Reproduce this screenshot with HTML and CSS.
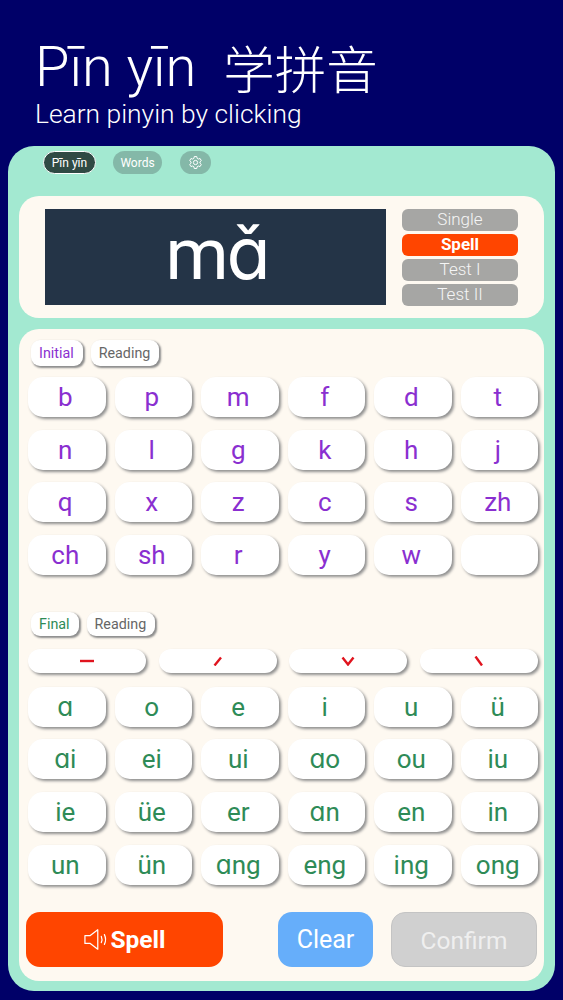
FILE: index.html
```html
<!DOCTYPE html>
<html lang="en">
<head>
<meta charset="utf-8">
<title>Pīn yīn</title>
<link rel="stylesheet" href="styles.css">
</head>
<body>
<header class="hero">
  <h1 class="title"><span>Pīn yīn</span><span class="title-cjk">学拼音</span></h1>
  <p class="subtitle">Learn pinyin by clicking</p>
</header>
<main class="card">
  <nav class="tabs">
    <button class="tab tab-active">Pīn yīn</button>
    <button class="tab tab-words">Words</button>
    <button class="tab tab-gear" aria-label="Settings">
      <svg viewBox="0 0 24 24" width="15" height="15" fill="none" stroke="#fff" stroke-width="1.6" stroke-linejoin="round"><path d="M10 2.500h4l.6 2.900 1.900 1.100 2.800-.9 2 3.400-2.200 2 0 2.100 2.200 2-2 3.400-2.800-.9-1.900 1.100-.6 2.900h-4l-.6-2.900-1.900-1.100-2.800.9-2-3.400 2.200-2 0-2.100-2.200-2 2-3.400 2.800.9 1.900-1.100z"/><circle cx="12" cy="12" r="3.400"/></svg>
    </button>
  </nav>
  <section class="panel display-panel">
    <div class="display">mɑ̌</div>
    <div class="modes">
      <button class="mode">Single</button>
      <button class="mode mode-on">Spell</button>
      <button class="mode">Test I</button>
      <button class="mode">Test II</button>
    </div>
  </section>
  <section class="panel keys-panel">
    <div class="labels">
      <span class="label purple">Initial</span>
      <span class="label">Reading</span>
    </div>
    <div class="keys purple">
      <button class="key">b</button><button class="key">p</button><button class="key">m</button><button class="key">f</button><button class="key">d</button><button class="key">t</button>
      <button class="key">n</button><button class="key">l</button><button class="key">g</button><button class="key">k</button><button class="key">h</button><button class="key">j</button>
      <button class="key">q</button><button class="key">x</button><button class="key">z</button><button class="key">c</button><button class="key">s</button><button class="key">zh</button>
      <button class="key">ch</button><button class="key">sh</button><button class="key">r</button><button class="key">y</button><button class="key">w</button><button class="key"></button>
    </div>
    <div class="labels labels-final">
      <span class="label green">Final</span>
      <span class="label">Reading</span>
    </div>
    <div class="tones">
      <button class="tone" aria-label="first tone"><svg viewBox="0 0 16 10" width="16" height="10"><path d="M1 5h14" stroke="#e0141e" stroke-width="2.400"/></svg></button>
      <button class="tone" aria-label="second tone"><svg viewBox="0 0 16 10" width="16" height="10"><path d="M4.500 9.500 11 1.500" stroke="#e0141e" stroke-width="2.400"/></svg></button>
      <button class="tone" aria-label="third tone"><svg viewBox="0 0 16 10" width="16" height="10"><path d="M2.500 1.500 8 8.500l5.500-7" fill="none" stroke="#e0141e" stroke-width="2.400"/></svg></button>
      <button class="tone" aria-label="fourth tone"><svg viewBox="0 0 16 10" width="16" height="10"><path d="M4.500 .5l6.500 9" stroke="#e0141e" stroke-width="2.400"/></svg></button>
    </div>
    <div class="keys green">
      <button class="key">ɑ</button><button class="key">o</button><button class="key">e</button><button class="key">i</button><button class="key">u</button><button class="key">ü</button>
      <button class="key">ɑi</button><button class="key">ei</button><button class="key">ui</button><button class="key">ɑo</button><button class="key">ou</button><button class="key">iu</button>
      <button class="key">ie</button><button class="key">üe</button><button class="key">er</button><button class="key">ɑn</button><button class="key">en</button><button class="key">in</button>
      <button class="key">un</button><button class="key">ün</button><button class="key">ɑng</button><button class="key">eng</button><button class="key">ing</button><button class="key">ong</button>
    </div>
    <div class="actions">
      <button class="action action-spell">
        <svg viewBox="0 0 28 26" width="26" height="23" fill="none" stroke="#fff" stroke-width="1.4" stroke-linejoin="round" stroke-linecap="round"><path d="M1.500 8.500h6L16 2v22l-8.500-6.500h-6z"/><path d="M20 9.500c1 2.300 1 4.700 0 7"/><path d="M23.500 7.500c1.700 3.500 1.700 7.500 0 11"/></svg>
        <span>Spell</span>
      </button>
      <button class="action action-clear">Clear</button>
      <button class="action action-confirm">Confirm</button>
    </div>
  </section>
</main>
</body>
</html>
```
FILE: styles.css
```css
* { box-sizing: border-box; }
html, body { margin: 0; padding: 0; }
body {
  width: 563px;
  height: 1000px;
  overflow: hidden;
  background: #000068;
  font-family: Roboto, Inter, "Noto Sans", "Noto Sans CJK SC", sans-serif;
}
button { font-family: inherit; border: 0; padding: 0; }

.hero { height: 146px; padding: 37px 0 0 35px; color: #fff; }
.title {
  margin: 0;
  display: flex;
  font-size: 56px;
  line-height: 60px;
  font-weight: 300;
}
.title-cjk { margin-left: 27px; font-family: "Noto Sans CJK SC", sans-serif; font-size: 51.500px; font-weight: 300; }
.subtitle { margin: 1px 0 0; font-size: 26.400px; line-height: 32px; font-weight: 300; }

.card {
  margin: 0 8px;
  height: 845px;
  padding: 5px 11px 10px;
  background: #a3e9d1;
  border-radius: 26px;
}
.tabs { display: flex; height: 23px; padding-left: 24px; margin-bottom: 22px; }
.tab {
  height: 23px;
  border-radius: 12px;
  font-size: 12px;
  color: #fff;
  background: #84b8a8;
}
.tab-active { width: 53px; background: #2f4a44; border: 1.500px solid #fff; }
.tab-words { width: 49px; margin-left: 17px; }
.tab-gear { width: 31px; margin-left: 18px; display: flex; align-items: center; justify-content: center; }

.panel { background: #fef9f1; border-radius: 20px; }
.display-panel {
  height: 122px;
  padding: 13px 26px;
  display: flex;
  gap: 16px;
  margin-bottom: 11px;
}
.display {
  width: 341px;
  height: 96px;
  padding-left: 3px;
  background: #243447;
  color: #fff;
  font-size: 72px;
  letter-spacing: -2px;
  line-height: 92px;
  text-align: center;
}
.modes { width: 116px; display: flex; flex-direction: column; gap: 3px; }
.mode {
  height: 22.200px;
  padding-bottom: 2px;
  border-radius: 6px;
  background: #a6a6a4;
  color: #f5f5f5;
  font-size: 17px;
  font-weight: 300;
}
.mode-on { background: #ff4500; color: #fff; font-weight: 700; }

.keys-panel { height: 652px; padding: 11px 6px 0 9px; }
.labels { display: flex; height: 26px; padding-left: 3px; gap: 8px; }
.label {
  height: 100%;
  padding: 0 9px 0 8px;
  display: flex;
  align-items: center;
  background: #fff;
  border-radius: 9px;
  color: #666;
  font-size: 14.300px;
  box-shadow: 1.500px 1.500px 2px #8d8d8d;
}
.labels-final { height: 24px; margin-top: 37px; }
.label.purple { color: #8a2fd0; }
.label.green { color: #2e8b57; }
.purple .key { color: #8a2fd0; }
.green .key { color: #2e8b57; padding-bottom: 6px; }
.keys {
  margin-top: 11px;
  display: grid;
  grid-template-columns: repeat(6, 77.500px);
  grid-auto-rows: 40px;
  column-gap: 9px;
  row-gap: 12.600px;
}
.key {
  background: #fff;
  border-radius: 15px;
  font-size: 26px;
  line-height: 40px;
  padding: 0 3px 2px 0;
  box-shadow: 2px 2px 3px #8f8f8f;
}
.tones {
  margin-top: 13px;
  display: grid;
  grid-template-columns: repeat(4, 118px);
  column-gap: 12.700px;
}
.tones + .keys { margin-top: 14px; }
.tone {
  height: 24px;
  background: #fff;
  border-radius: 12px;
  box-shadow: 2px 2px 3px #8f8f8f;
  display: flex;
  align-items: center;
  justify-content: center;
}
.actions {
  margin: 27px 0 0 -2px;
  display: flex;
  height: 55px;
}
.action { height: 55px; padding-top: 1px; border-radius: 14px; color: #fff; font-size: 25px; line-height: 54px; }
.action-spell {
  width: 197px;
  background: #ff4500;
  font-size: 24.500px;
  font-weight: 700;
  display: flex;
  align-items: center;
  justify-content: center;
  gap: 1px;
}
.action-clear { width: 95px; margin-left: 55px; background: #66aefa; }
.action-confirm { width: 146px; margin-left: 18px; background: #d0d0d0; color: #efefef; border: 1px solid #c4c4c4; font-size: 24.500px; }
```
